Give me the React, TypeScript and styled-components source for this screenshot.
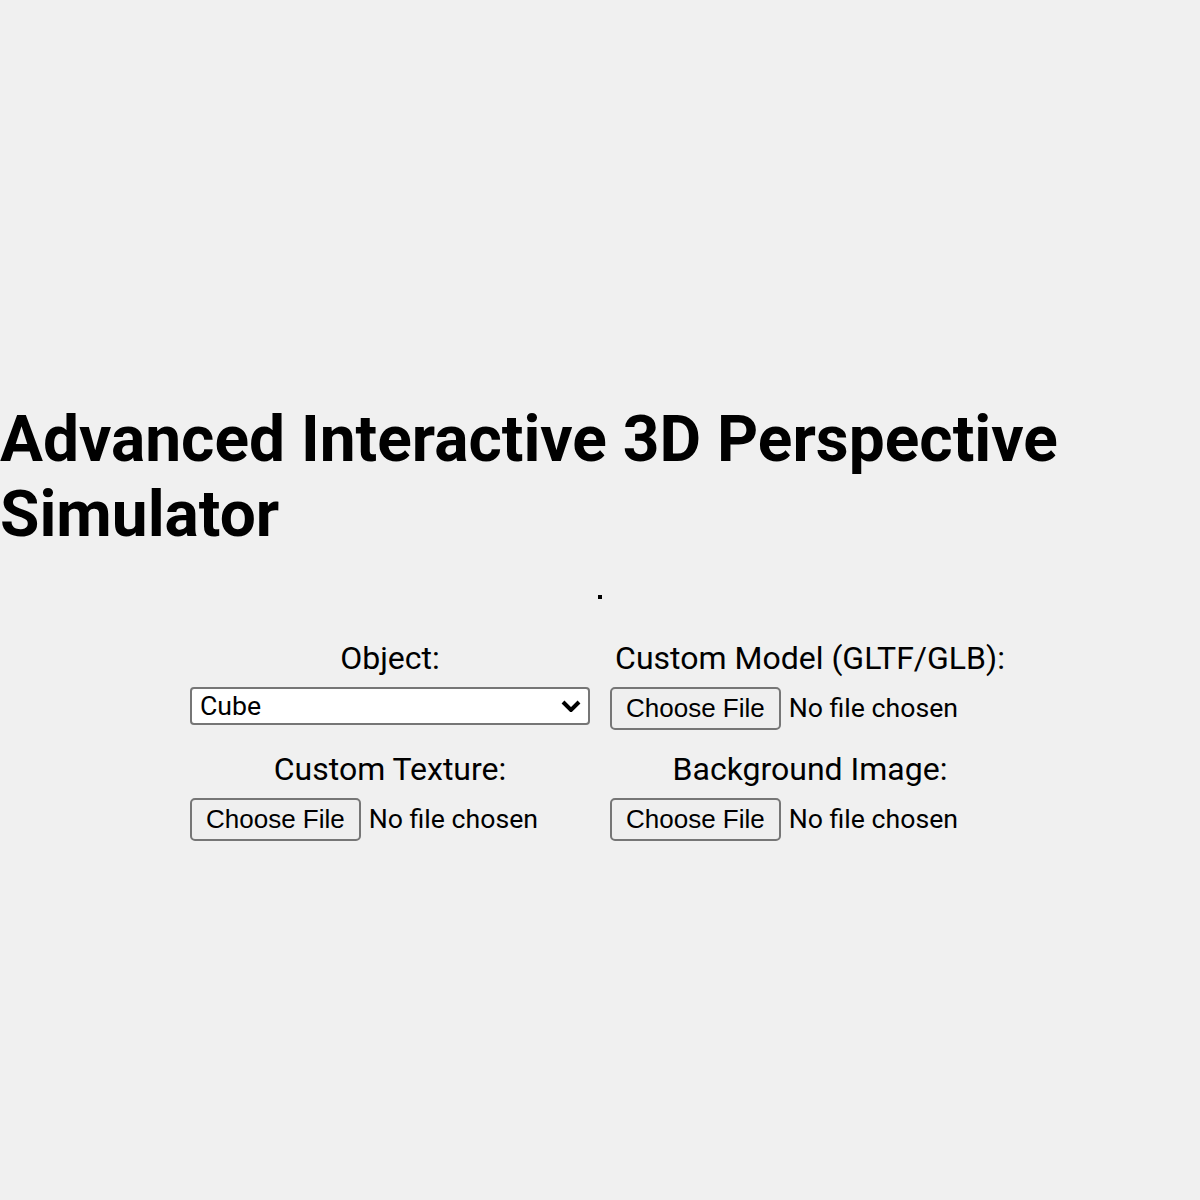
import styled, { createGlobalStyle } from "styled-components";

const GlobalStyle = createGlobalStyle`
  html, body {
    margin: 0;
    padding: 0;
    background: #f0f0f0;
  }
  body {
    font-family: Roboto, "Liberation Sans", sans-serif;
    color: #000;
  }
  select, input, button {
    font-family: inherit;
  }
`;

// the reference was taken at a device scale of 2, so the whole page is zoomed
const Page = styled.div`
  zoom: 2;
  width: 600px;
  height: 600px;
  display: flex;
  flex-direction: column;
  align-items: center;
  justify-content: center;
`;

const Title = styled.h1`
  font-size: 32px;
  font-weight: 700;
  margin: 0.67em 0;
`;

const Viewport = styled.div`
  width: 0;
  height: 0;
  border: 1px solid #000;
`;

const Controls = styled.div`
  margin-top: 20px;
  display: grid;
  grid-template-columns: 200px 200px;
  column-gap: 10px;
  row-gap: 10px;
`;

const Field = styled.div`
  display: flex;
  flex-direction: column;
  align-items: flex-start;
`;

const Label = styled.label`
  display: block;
  align-self: stretch;
  text-align: center;
  font-size: 16px;
  margin-bottom: 5px;
  white-space: nowrap;
`;

const chevron = encodeURIComponent(
  '<svg xmlns="http://www.w3.org/2000/svg" width="10" height="6" viewBox="0 0 10 6"><path d="M1 1l4 4 4-4" fill="none" stroke="#000" stroke-width="2"/></svg>'
);

const Select = styled.select`
  appearance: none;
  width: 100%;
  height: 19px;
  box-sizing: border-box;
  padding: 0 16px 0 4px;
  font-size: 13.33px;
  color: #000;
  background: #fff url("data:image/svg+xml,${chevron}") no-repeat right 3.5px center;
  border: 1px solid #767676;
  border-radius: 2px;
`;

const FileInput = styled.input.attrs({ type: "file" })`
  font-size: 13.33px;

  &::file-selector-button {
    font-size: 13px;
  }
`;

export default function App() {
  return (
    <>
      <GlobalStyle />
      <Page>
        <Title>Advanced Interactive 3D Perspective Simulator</Title>
        <Viewport />
        <Controls>
          <Field>
            <Label htmlFor="object">Object:</Label>
            <Select id="object" defaultValue="cube">
              <option value="cube">Cube</option>
              <option value="sphere">Sphere</option>
              <option value="cylinder">Cylinder</option>
              <option value="torus">Torus</option>
            </Select>
          </Field>
          <Field>
            <Label htmlFor="model">Custom Model (GLTF/GLB):</Label>
            <FileInput id="model" accept=".gltf,.glb" />
          </Field>
          <Field>
            <Label htmlFor="texture">Custom Texture:</Label>
            <FileInput id="texture" accept="image/*" />
          </Field>
          <Field>
            <Label htmlFor="background">Background Image:</Label>
            <FileInput id="background" accept="image/*" />
          </Field>
        </Controls>
      </Page>
    </>
  );
}
